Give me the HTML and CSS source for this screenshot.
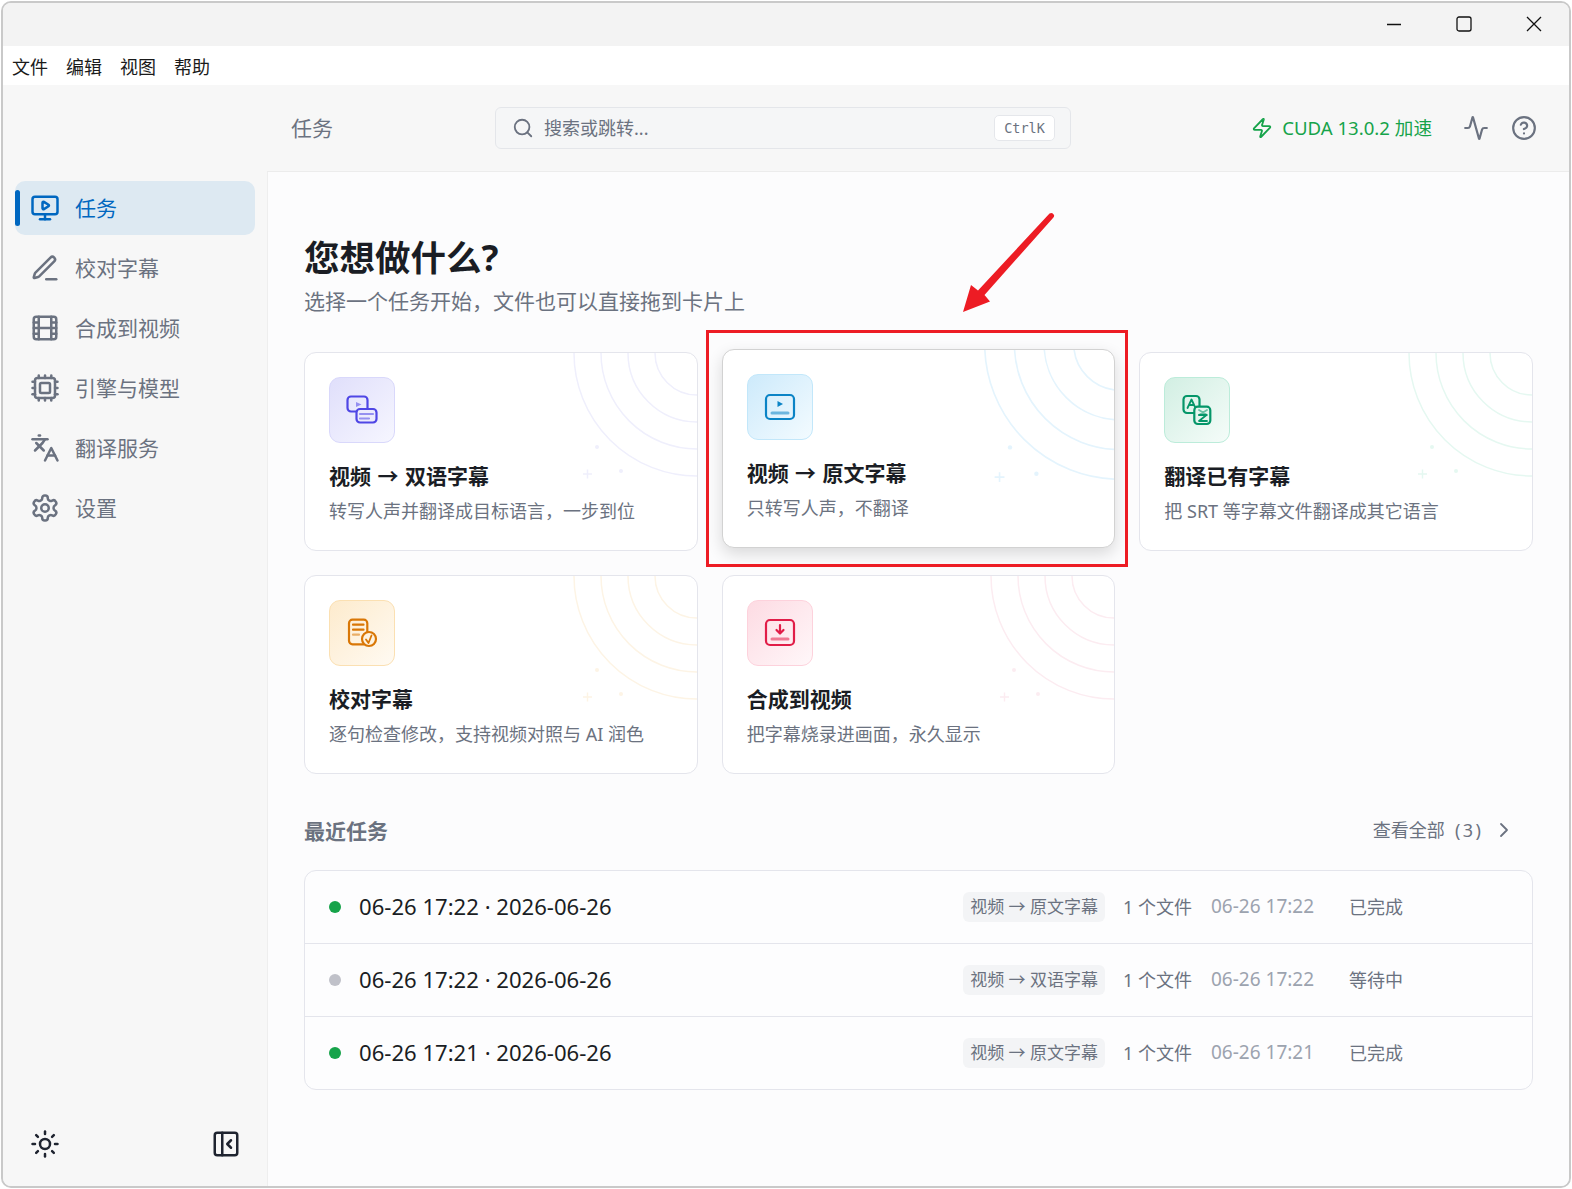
FILE: index.html
```html
<!DOCTYPE html>
<html lang="zh-CN">
<head>
<meta charset="utf-8">
<title>任务</title>
<link rel="stylesheet" href="styles.css">
</head>
<body>
<svg class="sprite" width="0" height="0" aria-hidden="true">
  <symbol id="deco" viewBox="0 0 134 134">
    <g fill="none" stroke="currentColor" stroke-width="1.5">
      <circle cx="134" cy="0" r="42"/><circle cx="134" cy="0" r="69"/><circle cx="134" cy="0" r="96"/><circle cx="134" cy="0" r="123"/>
      <path d="M20 121h9M24.500 116.500v9"/>
    </g>
    <circle cx="34" cy="94" r="2" fill="currentColor"/><circle cx="58" cy="118" r="2" fill="currentColor"/>
  </symbol>
</svg>
<div class="window">
  <header class="titlebar">
    <svg class="win-ctl" width="16" height="16" viewBox="0 0 16 16"><path d="M1 8.500h14"/></svg>
    <svg class="win-ctl" width="16" height="16" viewBox="0 0 16 16"><rect x="1" y="1" width="14" height="14" rx="2"/></svg>
    <svg class="win-ctl" width="16" height="16" viewBox="0 0 16 16"><path d="M1 1l14 14M15 1L1 15"/></svg>
  </header>
  <nav class="menubar"><span>文件</span><span>编辑</span><span>视图</span><span>帮助</span></nav>
  <div class="app">
    <aside class="sidebar">
      <ul class="nav">
        <li class="nav-item active"><svg class="ico" viewBox="0 0 24 24"><path d="M10 7.750a.750.750 0 0 1 1.142-.638l3.664 2.249a.750.750 0 0 1 0 1.278l-3.664 2.250a.750.750 0 0 1-1.142-.640z"/><path d="M12 17v4"/><path d="M8 21h8"/><rect x="2" y="3" width="20" height="14" rx="2"/></svg><span>任务</span></li>
        <li class="nav-item"><svg class="ico" viewBox="0 0 24 24"><path d="M13 21h8"/><path d="M16.376 3.622a1 1 0 0 1 3.002 3.002L7.368 18.635a2 2 0 0 1-.855.506l-2.872.838a.5.5 0 0 1-.62-.62l.838-2.872a2 2 0 0 1 .506-.854z"/></svg><span>校对字幕</span></li>
        <li class="nav-item"><svg class="ico" viewBox="0 0 24 24"><rect width="18" height="18" x="3" y="3" rx="2"/><path d="M7 3v18"/><path d="M3 7.500h4"/><path d="M3 12h18"/><path d="M3 16.500h4"/><path d="M17 3v18"/><path d="M17 7.500h4"/><path d="M17 16.500h4"/></svg><span>合成到视频</span></li>
        <li class="nav-item"><svg class="ico" viewBox="0 0 24 24"><path d="M12 20v2"/><path d="M12 2v2"/><path d="M17 20v2"/><path d="M17 2v2"/><path d="M2 12h2"/><path d="M2 17h2"/><path d="M2 7h2"/><path d="M20 12h2"/><path d="M20 17h2"/><path d="M20 7h2"/><path d="M7 20v2"/><path d="M7 2v2"/><rect x="4" y="4" width="16" height="16" rx="2"/><rect x="8" y="8" width="8" height="8" rx="1"/></svg><span>引擎与模型</span></li>
        <li class="nav-item"><svg class="ico" viewBox="0 0 24 24"><path d="m5 8 6 6"/><path d="m4 14 6-6 2-3"/><path d="M2 5h12"/><path d="M7 2h1"/><path d="m22 22-5-10-5 10"/><path d="M14 18h6"/></svg><span>翻译服务</span></li>
        <li class="nav-item"><svg class="ico" viewBox="0 0 24 24"><path d="M12.220 2h-.44a2 2 0 0 0-2 2v.18a2 2 0 0 1-1 1.730l-.43.25a2 2 0 0 1-2 0l-.15-.08a2 2 0 0 0-2.730.73l-.22.38a2 2 0 0 0 .73 2.730l.15.1a2 2 0 0 1 1 1.720v.51a2 2 0 0 1-1 1.740l-.15.09a2 2 0 0 0-.73 2.730l.22.38a2 2 0 0 0 2.730.73l.15-.08a2 2 0 0 1 2 0l.43.25a2 2 0 0 1 1 1.730V20a2 2 0 0 0 2 2h.44a2 2 0 0 0 2-2v-.18a2 2 0 0 1 1-1.730l.43-.25a2 2 0 0 1 2 0l.15.08a2 2 0 0 0 2.730-.73l.22-.39a2 2 0 0 0-.73-2.730l-.15-.08a2 2 0 0 1-1-1.740v-.5a2 2 0 0 1 1-1.740l.15-.09a2 2 0 0 0 .73-2.730l-.22-.38a2 2 0 0 0-2.730-.73l-.15.08a2 2 0 0 1-2 0l-.43-.25a2 2 0 0 1-1-1.730V4a2 2 0 0 0-2-2z"/><circle cx="12" cy="12" r="3"/></svg><span>设置</span></li>
      </ul>
      <div class="side-foot">
        <svg class="ico dark" viewBox="0 0 24 24"><circle cx="12" cy="12" r="4"/><path d="M12 2v2"/><path d="M12 20v2"/><path d="m4.930 4.930 1.410 1.410"/><path d="m17.660 17.660 1.410 1.410"/><path d="M2 12h2"/><path d="M20 12h2"/><path d="m6.340 17.660-1.410 1.410"/><path d="m19.070 4.930-1.410 1.410"/></svg>
        <svg class="ico dark" viewBox="0 0 24 24"><rect width="18" height="18" x="3" y="3" rx="2"/><path d="M9 3v18"/><path d="m16 15-3-3 3-3"/></svg>
      </div>
    </aside>
    <div class="content">
      <div class="topbar">
        <div class="crumb">任务</div>
        <div class="search">
          <svg class="ico search-ico" viewBox="0 0 24 24"><circle cx="11" cy="11" r="8"/><path d="m21 21-4.300-4.300"/></svg>
          <span class="search-text">搜索或跳转...</span>
          <kbd class="kbd">CtrlK</kbd>
        </div>
        <div class="status-cuda">
          <svg class="ico zap" viewBox="0 0 24 24"><path d="M4 14a1 1 0 0 1-.78-1.630l9.900-10.200a.5.5 0 0 1 .86.46l-1.920 6.020A1 1 0 0 0 13 10h7a1 1 0 0 1 .78 1.630l-9.900 10.200a.5.5 0 0 1-.86-.46l1.920-6.020A1 1 0 0 0 11 14z"/></svg>
          <span>CUDA 13.0.2 加速</span>
        </div>
        <svg class="ico top-ico" viewBox="0 0 24 24"><path d="M22 12h-2.480a2 2 0 0 0-1.930 1.460l-2.350 8.360a.250.250 0 0 1-.48 0L9.240 2.180a.250.250 0 0 0-.48 0l-2.350 8.360A2 2 0 0 1 4.490 12H2"/></svg>
        <svg class="ico top-ico" viewBox="0 0 24 24"><circle cx="12" cy="12" r="10"/><path d="M9.090 9a3 3 0 0 1 5.830 1c0 2-3 3-3 3"/><path d="M12 17h.01"/></svg>
      </div>
      <main class="main">
        <h1 class="heading">您想做什么?</h1>
        <p class="lead">选择一个任务开始，文件也可以直接拖到卡片上</p>
        <section class="cards">
          <article class="card purple">
            <svg class="deco"><use href="#deco"/></svg>
            <div class="tile"><svg viewBox="0 0 36 36"><rect x="3.500" y="4.500" width="20" height="15" rx="3.500"/><path class="soft fill" d="M12 10l5.500 2.500L12 15z"/><rect class="mask" x="12.500" y="17" width="20" height="13.500" rx="3.500"/><path class="soft" d="M16 22h13M16 26.500h9"/></svg></div>
            <h2 class="card-title">视频 → 双语字幕</h2>
            <p class="card-desc">转写人声并翻译成目标语言，一步到位</p>
          </article>
          <article class="card blue hover">
            <svg class="deco"><use href="#deco"/></svg>
            <div class="tile"><svg viewBox="0 0 36 36"><rect x="4" y="6" width="28" height="24" rx="4"/><path class="fill" d="M15.500 12l5.500 3-5.500 3z"/><path class="soft thick" d="M10 24h16"/></svg></div>
            <h2 class="card-title">视频 → 原文字幕</h2>
            <p class="card-desc">只转写人声，不翻译</p>
          </article>
          <article class="card green">
            <svg class="deco"><use href="#deco"/></svg>
            <div class="tile"><svg viewBox="0 0 36 36"><rect x="4.500" y="4" width="16" height="17" rx="3.500"/><path class="thin" d="M8.500 16l4-8.500 4 8.500M10 13h5"/><rect class="mask" x="15.300" y="14.700" width="16" height="17.300" rx="3.500"/><path class="soft thin" d="M20 18l8 5M28 18l-8 5"/><path class="thin" d="M20 23h7.500l-7.500 6h8"/></svg></div>
            <h2 class="card-title">翻译已有字幕</h2>
            <p class="card-desc">把 SRT 等字幕文件翻译成其它语言</p>
          </article>
          <article class="card orange">
            <svg class="deco"><use href="#deco"/></svg>
            <div class="tile"><svg viewBox="0 0 36 36"><rect x="5" y="4.700" width="18.300" height="24.600" rx="3.500"/><path d="M9 9.700h10.500M9 14.700h10.500"/><path class="soft" d="M9 19.700h6"/><circle class="mask" cx="25" cy="24" r="7"/><path class="thin" d="M22 24.500l2.500 3.500 3-7.500"/></svg></div>
            <h2 class="card-title">校对字幕</h2>
            <p class="card-desc">逐句检查修改，支持视频对照与 AI 润色</p>
          </article>
          <article class="card red">
            <svg class="deco"><use href="#deco"/></svg>
            <div class="tile"><svg viewBox="0 0 36 36"><rect x="4" y="5" width="28" height="25" rx="4"/><path d="M18 10v8M14.500 15l3.500 3.500 3.500-3.500"/><path class="soft thick" d="M10 24h16"/></svg></div>
            <h2 class="card-title">合成到视频</h2>
            <p class="card-desc">把字幕烧录进画面，永久显示</p>
          </article>
        </section>
        <div class="recent-head">
          <h3 class="recent-title">最近任务</h3>
          <div class="view-all"><span class="view-label">查看全部<span class="count"> (3)</span></span><svg class="ico chev" viewBox="0 0 24 24"><path d="m9 18 6-6-6-6"/></svg></div>
        </div>
        <ul class="tasks">
          <li class="task"><i class="dot done"></i><span class="task-name">06-26 17:22 · 2026-06-26</span><span class="tag">视频 → 原文字幕</span><span class="files">1 个文件</span><span class="time">06-26 17:22</span><span class="state">已完成</span></li>
          <li class="task"><i class="dot wait"></i><span class="task-name">06-26 17:22 · 2026-06-26</span><span class="tag">视频 → 双语字幕</span><span class="files">1 个文件</span><span class="time">06-26 17:22</span><span class="state">等待中</span></li>
          <li class="task"><i class="dot done"></i><span class="task-name">06-26 17:21 · 2026-06-26</span><span class="tag">视频 → 原文字幕</span><span class="files">1 个文件</span><span class="time">06-26 17:21</span><span class="state">已完成</span></li>
        </ul>
      </main>
    </div>
  </div>
  <div class="callout-box"></div>
  <svg class="callout-arrow" viewBox="955 208 105 110"><path d="M1049.500 213.500q3-1.500 4.500 1.500q.5 1.500-1 3L984.500 295l5.500 6.500L963 312l8-27 7 5.500z"/></svg>
</div>
</body>
</html>
```

FILE: styles.css
```css
* { box-sizing: border-box; }
html, body { margin: 0; padding: 0; }
body {
  width: 1572px;
  height: 1189px;
  background: #fff;
  font-family: "Noto Sans", "Noto Sans CJK SC", sans-serif;
  color: #1a1a1a;
  overflow: hidden;
}
.sprite { position: absolute; }
h1, h2, h3, p, ul { margin: 0; padding: 0; }
ul { list-style: none; }

.window {
  position: relative;
  margin: 1px;
  height: 1187px;
  border: 2px solid #c9c9c9;
  border-radius: 10px;
  overflow: hidden;
  display: flex;
  flex-direction: column;
  background: #f7f7f7;
}
.titlebar {
  height: 43px;
  flex: none;
  background: #f3f3f3;
  display: flex;
  justify-content: flex-end;
  align-items: center;
  gap: 54px;
  padding: 0 27px 1px 0;
}
.win-ctl { fill: none; stroke: #111; stroke-width: 1.3; }
.menubar {
  height: 39px;
  flex: none;
  background: #fff;
  display: flex;
  align-items: center;
  gap: 18px;
  padding-left: 9px;
  font-size: 18px;
  color: #1a1a1a;
}
.app { flex: 1; display: flex; min-height: 0; }

.ico {
  width: 30px;
  height: 30px;
  flex: none;
  fill: none;
  stroke: currentColor;
  stroke-width: 2;
  stroke-linecap: round;
  stroke-linejoin: round;
}
.ico.dark { color: #1f2430; }

.sidebar {
  width: 264px;
  flex: none;
  padding: 96px 12px 0 12px;
  display: flex;
  flex-direction: column;
  background: #f7f7f7;
}
.nav { display: flex; flex-direction: column; gap: 6px; }
.nav-item {
  position: relative;
  height: 54px;
  border-radius: 10px;
  display: flex;
  align-items: center;
  gap: 15px;
  padding-left: 15px;
  font-size: 21px;
  color: #6b7280;
}
.nav-item span { margin-bottom: 2px; }
.nav-item.active { background: #dde9f2; color: #0067c0; }
.nav-item.active::before {
  content: "";
  position: absolute;
  left: 0;
  top: 9px;
  bottom: 9px;
  width: 5px;
  border-radius: 3px;
  background: #0067c0;
}
.side-foot {
  margin-top: auto;
  height: 88px;
  padding: 31px 14px 0 15px;
  display: flex;
  justify-content: space-between;
  align-items: flex-start;
}

.content { flex: 1; min-width: 0; display: flex; flex-direction: column; }
.topbar {
  height: 87px;
  flex: none;
  display: flex;
  align-items: center;
  padding: 0 32px 0 24px;
  border-bottom: 1px solid #ececec;
}
.crumb { width: 204px; font-size: 21px; color: #6b7280; margin-bottom: 2px; }
.search {
  width: 576px;
  height: 42px;
  border: 1px solid #e4e6ea;
  border-radius: 6px;
  background: #f5f6f7;
  display: flex;
  align-items: center;
  padding: 0 15px 0 16px;
  color: #6b7280;
}
.search-ico { width: 22px; height: 22px; }
.search-text { margin: 0 0 2px 10px; font-size: 18px; flex: 1; }
.kbd {
  height: 26px;
  width: 61px;
  border: 1px solid #e5e7eb;
  border-radius: 5px;
  background: #fff;
  font-family: "DejaVu Sans Mono", "Liberation Mono", monospace;
  font-size: 13.500px;
  line-height: 24px;
  text-align: center;
  color: #6b7280;
}
.status-cuda {
  margin-left: auto;
  display: flex;
  align-items: center;
  gap: 9px;
  font-size: 18.600px;
  color: #16a34a;
}
.status-cuda span { margin-bottom: 3px; }
.zap { width: 22px; height: 22px; }
.top-ico { width: 26px; height: 26px; color: #6b7280; margin-left: 31px; }
.top-ico + .top-ico { margin-left: 22px; }

.main {
  flex: 1;
  min-height: 0;
  position: relative;
  background: #fcfcfd;
  border-left: 1px solid #eeeeee;
  padding: 61px 36px 0 36px;
}
.heading { font-size: 35.500px; line-height: 48px; font-weight: 700; color: #1a1d24; }
.lead { margin-top: 5px; font-size: 21px; line-height: 30px; color: #6b7280; }

.cards {
  margin-top: 36px;
  display: grid;
  grid-template-columns: repeat(3, 1fr);
  grid-auto-rows: 199px;
  gap: 24px;
}
.card {
  position: relative;
  overflow: hidden;
  background: #fff;
  border: 1px solid #e4e5ec;
  border-radius: 12px;
  padding: 24px;
}
.card.hover {
  transform: translateY(-3px);
  border-color: #d2d2d2;
  box-shadow: 0 6px 16px rgba(0, 0, 0, .14);
}
.deco { position: absolute; top: 0; right: 0; width: 134px; height: 134px; overflow: visible; transform-origin: top right; }
.card.hover .deco { transform: translate(6px, -6px) scale(1.1); }
.tile {
  position: relative;
  width: 66px;
  height: 66px;
  border: 1.500px solid;
  border-radius: 11px;
  display: flex;
  align-items: center;
  justify-content: center;
}
.tile svg {
  width: 36px;
  height: 36px;
  fill: none;
  stroke: currentColor;
  stroke-width: 2.200;
  stroke-linecap: round;
  stroke-linejoin: round;
}
.tile .soft { opacity: .55; }
.tile .fill { fill: currentColor; stroke: none; }
.tile .thick { stroke-width: 3; }
.tile .thin { stroke-width: 1.800; }
.purple .tile .mask { fill: #ecebfd; }
.green .tile .mask { fill: #e6f6ef; }
.orange .tile .mask { fill: #fef3e0; }
.purple .deco { color: #efeffc; }
.blue .deco { color: #e4f4fd; }
.green .deco { color: #e5f8f1; }
.orange .deco { color: #fdf4e5; }
.red .deco { color: #fcecf1; }
.purple .tile { color: #4f46e5; border-color: #d9d8fb; background: linear-gradient(135deg, #e0dffb, #f6f6ff); }
.blue .tile { color: #0b84c6; border-color: #c2e7fa; background: linear-gradient(135deg, #cdeafb, #f3fbff); }
.green .tile { color: #059669; border-color: #bcecda; background: linear-gradient(135deg, #d2efe3, #f5fcf9); }
.orange .tile { color: #d97706; border-color: #fbe0b2; background: linear-gradient(135deg, #fdebcd, #fffaf2); }
.red .tile { color: #e11d48; border-color: #fdd2dc; background: linear-gradient(135deg, #fddbe3, #fff7f9); }
.card-title {
  position: relative;
  margin-top: 18px;
  font-size: 21px;
  line-height: 30px;
  font-weight: 700;
  color: #1a1d24;
  word-spacing: 1px;
}
.card-desc {
  position: relative;
  margin-top: 6px;
  font-size: 18px;
  line-height: 28px;
  color: #6b7280;
}

.recent-head {
  margin-top: 41px;
  height: 30px;
  display: flex;
  align-items: center;
  justify-content: space-between;
}
.recent-title { font-size: 21px; font-weight: 700; color: #6b7280; }
.view-all {
  display: flex;
  align-items: center;
  gap: 11px;
  padding-right: 17px;
  font-size: 18px;
  color: #6b7280;
}
.view-label { white-space: nowrap; margin-bottom: 2px; }
.count { letter-spacing: 2.500px; margin-left: 3px; margin-right: -2.500px; }
.chev { width: 24px; height: 24px; stroke-width: 1.800; }
.tasks {
  margin-top: 25px;
  border: 1px solid #e4e5ec;
  border-radius: 12px;
  background: #fdfdfe;
}
.task {
  height: 73px;
  display: flex;
  align-items: center;
  padding: 0 129px 0 24px;
  border-bottom: 1px solid #e4e5ec;
}
.task:last-child { height: 72px; border-bottom: 0; }
.dot { width: 12px; height: 12px; border-radius: 50%; flex: none; }
.dot.done { background: #16a34a; }
.dot.wait { background: #c0c1c9; }
.task-name { margin: 0 0 2px 18px; flex: 1; font-size: 22.100px; color: #1a1d24; }
.tag {
  height: 30px;
  padding: 0 7px;
  border-radius: 6px;
  background: #f3f4f6;
  font-size: 17px;
  line-height: 30px;
  color: #6b7280;
}
.files { margin: 0 0 3px 18px; width: 88px; font-size: 18px; color: #6b7280; }
.time { width: 138px; margin-bottom: 2px; font-size: 19px; color: #9ca3af; }
.state { margin-bottom: 3px; font-size: 18px; color: #6b7280; }

.callout-box {
  position: absolute;
  left: 703px;
  top: 327px;
  width: 422px;
  height: 237px;
  border: 3px solid #ed1c24;
}
.callout-arrow {
  position: absolute;
  left: 952px;
  top: 205px;
  width: 105px;
  height: 110px;
  fill: #ed1c24;
}
```
